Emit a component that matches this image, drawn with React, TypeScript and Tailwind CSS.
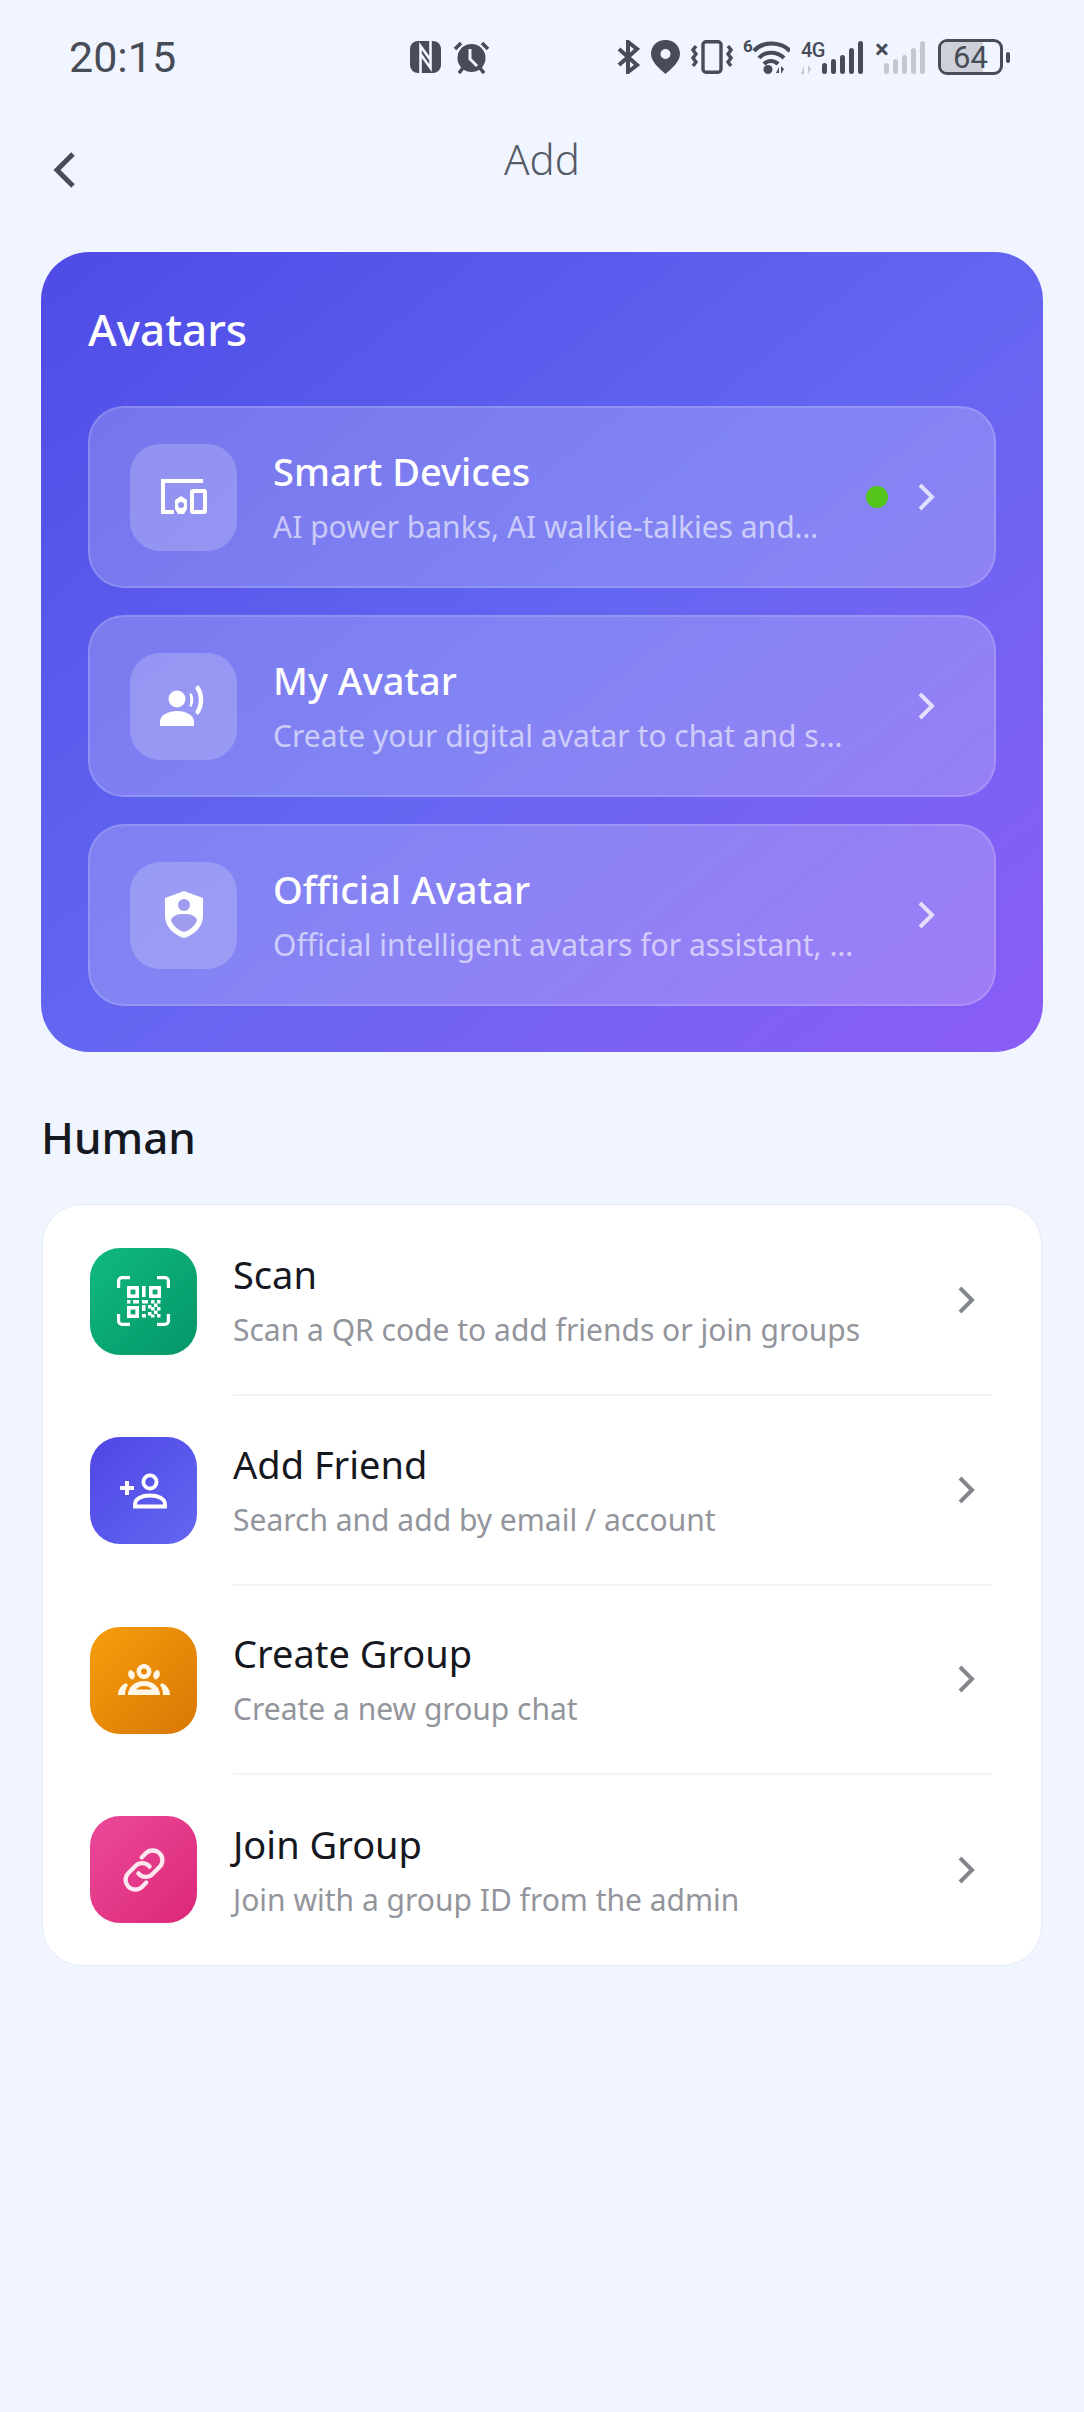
const font = "font-['Noto_Sans','Open_Sans',sans-serif]"

const Chevron = ({ className }: { className: string }) => (
  <svg viewBox="0 0 20 30" className={className} fill="none" stroke="currentColor" strokeWidth="4">
    <path d="M3 3 L15 15 L3 27" />
  </svg>
)

const DevicesIcon = () => (
  <svg viewBox="0 0 48 36" className="w-[48px] h-[36px] text-white" fill="none" stroke="currentColor" strokeWidth="4">
    <path d="M43 2 H3 V33 H14" />
    <rect x="32" y="12" width="13" height="21" rx="1" />
    <path d="M21 17 l6 4 v9 l-3 5 h-6 l-3-5 v-9 z" fill="currentColor" stroke="none" />
    <circle cx="21" cy="26" r="3" fill="#9490ef" stroke="none" />
  </svg>
)

const VoiceIcon = () => (
  <svg viewBox="0 0 48 42" className="w-[48px] h-[42px] text-white" fill="currentColor">
    <circle cx="17" cy="14" r="8.5" />
    <path d="M0 41 v-4 c0-7 8-11 17-11 s17 4 17 11 v4 z" />
    <path d="M31 8 c3 4 3 10 0 14 l-1.5-1 c1-4 1-8 0-12z" />
    <path d="M38 0 c7 7 7 22 0 30 l-3-3 c5-7 5-17 0-24z" />
  </svg>
)

const ShieldIcon = () => (
  <svg viewBox="0 0 40 48" className="w-[40px] h-[48px] text-white">
    <path fill="currentColor" d="M20 0 L39 7 V25 C39 36 30 44 20 47 C10 44 1 36 1 25 V7 Z" />
    <circle cx="20" cy="14" r="6" fill="#a09df0" />
    <path fill="#a09df0" d="M7 29 C9 24 14 23 20 23 s11 1 13 6 C31 35 26 39 20 41 C14 39 9 35 7 29 Z" />
  </svg>
)

const QrIcon = () => (
  <svg viewBox="0 0 53 50" className="w-[53px] h-[50px] text-white" fill="none" stroke="currentColor" strokeWidth="3.2">
    <path d="M1.6 12 V5 a3.4 3.4 0 0 1 3.4-3.4 H13 M40 1.6 H48 a3.4 3.4 0 0 1 3.4 3.4 V12 M1.6 38 V45 a3.4 3.4 0 0 0 3.4 3.4 H13 M40 48.4 H48 a3.4 3.4 0 0 0 3.4-3.4 V38" />
    <rect x="11.8" y="11.8" width="8.4" height="8.4" strokeWidth="3.6" />
    <rect x="33.8" y="11.8" width="8.4" height="8.4" strokeWidth="3.6" />
    <rect x="11.8" y="31.8" width="8.4" height="8.4" strokeWidth="3.6" />
    <g fill="currentColor" stroke="none">
      <rect x="25" y="10" width="3.6" height="11" />
      <rect x="10" y="24" width="3.5" height="3.5" />
      <rect x="16" y="24" width="6" height="3.5" />
      <rect x="25" y="24" width="6" height="3.5" />
      <rect x="34" y="24" width="3.5" height="3.5" />
      <rect x="40" y="24" width="3.5" height="3.5" />
      <rect x="37" y="27.5" width="3.5" height="3.5" />
      <rect x="25" y="29" width="3.5" height="6" />
      <rect x="31" y="29" width="3.5" height="3.5" />
      <rect x="34" y="31" width="3.5" height="3.5" />
      <rect x="40" y="31" width="3.5" height="3.5" />
      <rect x="37" y="34.5" width="3.5" height="3.5" />
      <rect x="31" y="36" width="3.5" height="3.5" />
      <rect x="40" y="38" width="3.5" height="3.5" />
      <rect x="25" y="38" width="4" height="3.5" />
      <rect x="34" y="38.5" width="3.5" height="3" />
    </g>
  </svg>
)

const AddFriendIcon = () => (
  <svg viewBox="0 0 48 36" className="w-[48px] h-[36px] text-white" fill="none" stroke="currentColor" strokeWidth="3.8">
    <circle cx="30" cy="9" r="6.6" />
    <path d="M15 33.5 v-2 c0-6 7-9 15-9 s15 3 15 9 v2 z" />
    <path strokeWidth="4" d="M0 15 H14 M7 8 V22" />
  </svg>
)

const GroupIcon = () => (
  <svg viewBox="0 0 52 32" className="w-[52px] h-[32px] text-[#fff6e6]" fill="currentColor">
    <path fillRule="evenodd" d="M26 0 a7.5 7.5 0 1 1 0 15 a7.5 7.5 0 0 1 0-15z m0 4.5 a3 3 0 1 0 0 6 a3 3 0 0 0 0-6z" />
    <path d="M12 6 a5.5 5.5 0 0 1 3 9.5 a5.5 5.5 0 0 1-3-9.5z M40 6 a5.5 5.5 0 0 0-3 9.5 a5.5 5.5 0 0 0 3-9.5z" />
    <path fillRule="evenodd" d="M10 31 c0-8 7-14 16-14 s16 6 16 14 z M18 25.5 c2-2.5 5-3.5 8-3.5 s6 1 8 3.5 z" />
    <path d="M0 31 c0-5 3-10 8-12 l2 2 c-2 3-3 6-3 10 z M52 31 c0-5-3-10-8-12 l-2 2 c2 3 3 6 3 10 z" />
  </svg>
)

const LinkIcon = () => (
  <svg viewBox="0 0 24 24" className="w-[54px] h-[54px] text-[#fde7f1]" fill="none" stroke="currentColor" strokeWidth="1.9" strokeLinecap="round" strokeLinejoin="round">
    <path d="M9.5 13.5a4.2 4.2 0 0 0 6.2.4l3.2-3.2a4.3 4.3 0 0 0-6.1-6.1L11 6.4" />
    <path d="M14.5 10.5a4.2 4.2 0 0 0-6.2-.4l-3.2 3.2a4.3 4.3 0 0 0 6.1 6.1l1.8-1.8" />
  </svg>
)

const Bars = ({ color }: { color: string }) => (
  <div className="absolute right-0 bottom-0 flex items-end gap-[4px]">
    {[11, 15, 19, 26, 33].map((h) => (
      <i key={h} className={`block w-[5px] rounded-[2.5px] ${color}`} style={{ height: h }} />
    ))}
  </div>
)

const StatusBar = () => (
  <div className="flex items-center h-[34px] pl-[69px] text-[#474c57]">
    <span className="w-[106px] text-[43px] leading-none font-['Roboto',sans-serif]">20:15</span>
    {/* nfc */}
    <svg viewBox="0 0 31 32" className="w-[31px] h-[32px] ml-[235px]">
      <rect width="31" height="32" rx="8" fill="currentColor" />
      <path d="M10.5 32 V5 L20.5 19 V24 M20.5 0 V27 L10.5 13 V8" fill="none" stroke="#f0f5ff" strokeWidth="2.6" />
    </svg>
    {/* alarm */}
    <svg viewBox="0 0 37 34" className="w-[37px] h-[34px] ml-[12px]" fill="currentColor">
      <circle cx="18.5" cy="18" r="14" />
      <path d="M17 9 V19 L24 26" stroke="#f0f5ff" strokeWidth="3" fill="none" />
      <path d="M2 9 L8 3 M35 9 L29 3 M6 33 L10 28 M31 33 L27 28" stroke="currentColor" strokeWidth="3.6" />
    </svg>
    {/* bluetooth */}
    <svg viewBox="0 0 23 34" className="w-[23px] h-[34px] ml-[127px]" fill="none" stroke="currentColor" strokeWidth="4">
      <path d="M2 9 L20 25 L11 32 V2 L20 9 L2 25" />
    </svg>
    {/* location */}
    <svg viewBox="0 0 29 34" className="w-[29px] h-[34px] ml-[11px]" fill="currentColor">
      <path fillRule="evenodd" d="M14.5 0 C23 0 29 6 29 14 C29 22 20 29 14.5 34 C9 29 0 22 0 14 C0 6 6 0 14.5 0z M14.5 9 a5 5 0 1 0 0 10 a5 5 0 0 0 0-10z" />
    </svg>
    {/* vibrate */}
    <svg viewBox="0 0 42 34" className="w-[42px] h-[34px] ml-[11px]" fill="none" stroke="currentColor" strokeWidth="3.4">
      <rect x="12" y="1.7" width="18" height="30.6" rx="3" />
      <path d="M5 6 L2 10 L5 14 L2 18 L5 22 L2 26 M37 6 L40 10 L37 14 L40 18 L37 22 L40 26" />
    </svg>
    {/* wifi */}
    <div className="relative w-[47px] h-[34px] ml-[10px]">
      <span className="absolute left-0 top-[-2px] text-[17px] leading-none font-['Roboto',sans-serif] font-bold">6</span>
      <svg viewBox="0 0 47 34" className="w-[47px] h-[34px]" fill="none" stroke="currentColor" strokeWidth="4.2">
        <path d="M11 11 C19 1 38 1 47 11 M16 18 C22 11 34 11 41 18 M21 24 C25 20 31 20 35 24" />
        <circle cx="25" cy="29.5" r="4.5" fill="currentColor" stroke="none" />
        <path d="M33 33 l3-6 v6z M38 26 v8 l3-5z" fill="currentColor" stroke="none" />
      </svg>
    </div>
    {/* 4g signal */}
    <div className="relative w-[62px] h-[34px] ml-[11px]">
      <span className="absolute left-0 top-[0px] text-[20px] leading-none font-['Roboto',sans-serif] font-medium tracking-[-0.5px]">4G</span>
      <svg viewBox="0 0 14 9" className="absolute left-0 bottom-0 w-[14px] h-[9px] text-[#c3c7ce]" fill="currentColor">
        <path d="M0 9 l3-9 v9z M7 0 v9 l3-5z" />
      </svg>
      <Bars color="bg-[#474c57]" />
    </div>
    {/* no sim signal */}
    <div className="relative w-[50px] h-[34px] ml-[12px]">
      <span className="absolute left-0 top-[-4px] text-[26px] leading-none font-['Roboto',sans-serif] font-bold">×</span>
      <Bars color="bg-[#c3c7ce]" />
    </div>
    {/* battery */}
    <div className="relative flex items-center justify-center w-[65px] h-[36px] ml-[13px] rounded-[9px] border-[3px] border-[#474c57] overflow-hidden">
      <div className="absolute left-0 inset-y-0 w-[72%] bg-[#cdd0d8]" />
      <span className="relative text-[31px] leading-none font-['Roboto',sans-serif]">64</span>
    </div>
    <div className="w-[4px] h-[11px] ml-[3px] rounded-[2px] bg-[#474c57]" />
  </div>
)

const avatars = [
  { title: 'Smart Devices', sub: 'AI power banks, AI walkie-talkies and…', icon: <DevicesIcon />, dot: true },
  { title: 'My Avatar', sub: 'Create your digital avatar to chat and s…', icon: <VoiceIcon /> },
  { title: 'Official Avatar', sub: 'Official intelligent avatars for assistant, …', icon: <ShieldIcon /> },
]

const humans = [
  { title: 'Scan', sub: 'Scan a QR code to add friends or join groups', icon: <QrIcon />, bg: 'bg-gradient-to-br from-[#10b981] to-[#059669]' },
  { title: 'Add Friend', sub: 'Search and add by email / account', icon: <AddFriendIcon />, bg: 'bg-gradient-to-br from-[#4f46e5] to-[#6366f1]' },
  { title: 'Create Group', sub: 'Create a new group chat', icon: <GroupIcon />, bg: 'bg-gradient-to-br from-[#f59e0b] to-[#d97706]' },
  { title: 'Join Group', sub: 'Join with a group ID from the admin', icon: <LinkIcon />, bg: 'bg-gradient-to-br from-[#ec4899] to-[#db2777]' },
]

const App = () => {
  return (
    <div className={`w-[1084px] h-[2412px] bg-[#f0f5ff] pt-[40px] ${font}`}>
      <StatusBar />

      <div className="relative flex items-center justify-center h-[40px] mt-[65px] mb-[73px]">
        <svg viewBox="0 0 24 36" className="absolute left-[52px] top-[13px] w-[24px] h-[36px] text-[#474c57]" fill="none" stroke="currentColor" strokeWidth="5">
          <path d="M21 2 L5 18 L21 34" />
        </svg>
        <span className="text-[42px] leading-none text-[#565b66] font-light">Add</span>
      </div>

      <div className="mx-[41px] h-[800px] rounded-[48px] bg-gradient-to-br from-[#4f4be6] via-[#6366f1] to-[#8b5cf6] px-[47px] pt-[49px]">
        <h2 className="text-[44px] leading-[56px] font-medium text-white">Avatars</h2>
        <div className="flex flex-col gap-[27px] mt-[49px]">
          {avatars.map((a) => (
            <div key={a.title} className="flex items-center h-[182px] pl-[40px] pr-[57px] rounded-[36px] bg-white/20 border-2 border-white/15">
              <div className="flex items-center justify-center shrink-0 w-[107px] h-[107px] rounded-[30px] bg-white/20">{a.icon}</div>
              <div className="ml-[36px] grow min-w-0 pb-[1px]">
                <div className="text-[38px] leading-[48px] font-medium text-white">{a.title}</div>
                <div className="text-[30px] leading-[40px] mt-[12px] text-white/60 whitespace-nowrap">{a.sub}</div>
              </div>
              {a.dot && <div className="shrink-0 mr-[29px] w-[22px] h-[22px] rounded-full bg-[#52c41a]" />}
              <Chevron className="shrink-0 w-[20px] h-[30px] text-white/75" />
            </div>
          ))}
        </div>
      </div>

      <h2 className="ml-[41px] mt-[57px] text-[44px] leading-[56px] font-medium text-[#15181e]">Human</h2>

      <div className="mx-[42px] mt-[39px] rounded-[40px] bg-white border border-[#e6ebf5] pl-[47px] pt-[1.5px]">
        {humans.map((h, i) => (
          <div key={h.title} className="flex items-center h-[189.5px]">
            <div className={`flex items-center justify-center shrink-0 w-[107px] h-[107px] rounded-[30px] ${h.bg}`}>{h.icon}</div>
            <div className={`flex items-center self-stretch grow ml-[36px] mr-[49px] pr-[15px] ${i < humans.length - 1 ? 'border-b-2 border-[#f1f3f6]' : ''}`}>
              <div className="grow">
                <div className="text-[38px] leading-[48px] text-[#15181e]">{h.title}</div>
                <div className="text-[30px] leading-[40px] mt-[12px] text-[#92959b]">{h.sub}</div>
              </div>
              <Chevron className="w-[20px] h-[30px] text-[#83868d]" />
            </div>
          </div>
        ))}
      </div>
    </div>
  )
}
export default App
